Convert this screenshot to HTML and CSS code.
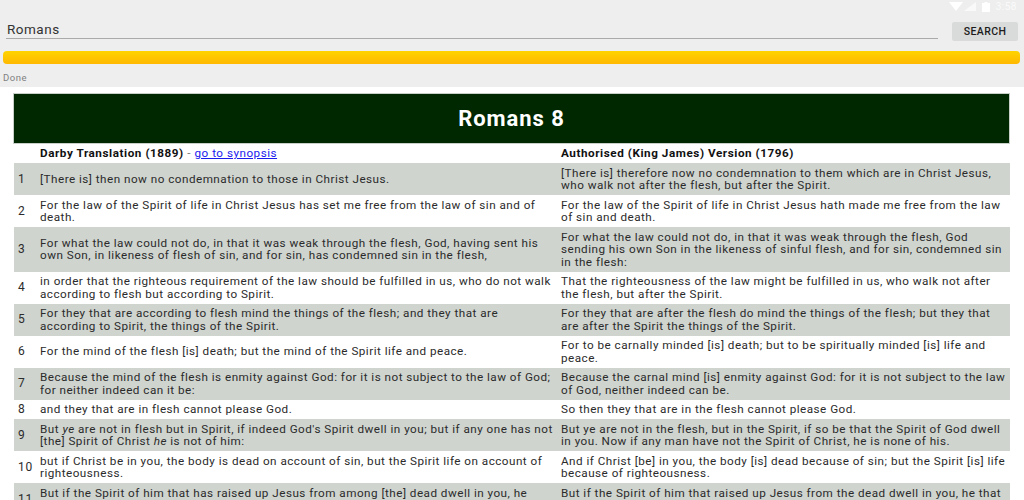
FILE: index.html
```html
<!DOCTYPE html>
<html lang="en">
<head>
<meta charset="utf-8">
<title>Romans 8</title>
<link rel="stylesheet" href="styles.css">
</head>
<body>
<header class="app">
  <div class="status">
    <svg class="wifi" width="14" height="9" viewBox="0 0 14 9"><path d="M0 0H14L7 9Z"/></svg>
    <svg class="signal" width="12" height="9" viewBox="0 0 12 9"><path d="M0 9L12 0V9Z"/></svg>
    <svg class="battery" width="8" height="10" viewBox="0 0 8 10"><path d="M2.500 0H5.500V1H8V10H0V1H2.500Z"/></svg>
    <span class="clock">3:58</span>
  </div>
  <div class="search">
    <div class="field">Romans</div>
    <button class="btn">SEARCH</button>
  </div>
  <div class="bar"></div>
  <div class="done">Done</div>
</header>
<main class="content">
  <h1 class="title">Romans 8</h1>
  <table class="verses">
    <colgroup><col class="c-n"><col class="c-d"><col class="c-k"></colgroup>
    <tr class="head"><th></th><th>Darby Translation (1889) <span class="dash">-</span> <a href="#">go to synopsis</a></th><th>Authorised (King James) Version (1796)</th></tr>
    <tr class="odd"><td>1</td><td>[There is] then now no condemnation to those in Christ Jesus.</td><td>[There is] therefore now no condemnation to them which are in Christ Jesus, who walk not after the flesh, but after the Spirit.</td></tr>
    <tr><td>2</td><td>For the law of the Spirit of life in Christ Jesus has set me free from the law of sin and of death.</td><td>For the law of the Spirit of life in Christ Jesus hath made me free from the law of sin and death.</td></tr>
    <tr class="odd"><td>3</td><td>For what the law could not do, in that it was weak through the flesh, God, having sent his own Son, in likeness of flesh of sin, and for sin, has condemned sin in the flesh,</td><td>For what the law could not do, in that it was weak through the flesh, God sending his own Son in the likeness of sinful flesh, and for sin, condemned sin in the flesh:</td></tr>
    <tr><td>4</td><td>in order that the righteous requirement of the law should be fulfilled in us, who do not walk according to flesh but according to Spirit.</td><td>That the righteousness of the law might be fulfilled in us, who walk not after the flesh, but after the Spirit.</td></tr>
    <tr class="odd"><td>5</td><td>For they that are according to flesh mind the things of the flesh; and they that are according to Spirit, the things of the Spirit.</td><td>For they that are after the flesh do mind the things of the flesh; but they that are after the Spirit the things of the Spirit.</td></tr>
    <tr><td>6</td><td>For the mind of the flesh [is] death; but the mind of the Spirit life and peace.</td><td>For to be carnally minded [is] death; but to be spiritually minded [is] life and peace.</td></tr>
    <tr class="odd"><td>7</td><td>Because the mind of the flesh is enmity against God: for it is not subject to the law of God; for neither indeed can it be:</td><td>Because the carnal mind [is] enmity against God: for it is not subject to the law of God, neither indeed can be.</td></tr>
    <tr><td>8</td><td>and they that are in flesh cannot please God.</td><td>So then they that are in the flesh cannot please God.</td></tr>
    <tr class="odd"><td>9</td><td>But <em>ye</em> are not in flesh but in Spirit, if indeed God's Spirit dwell in you; but if any one has not [the] Spirit of Christ <em>he</em> is not of him:</td><td>But ye are not in the flesh, but in the Spirit, if so be that the Spirit of God dwell in you. Now if any man have not the Spirit of Christ, he is none of his.</td></tr>
    <tr><td>10</td><td>but if Christ be in you, the body is dead on account of sin, but the Spirit life on account of righteousness.</td><td>And if Christ [be] in you, the body [is] dead because of sin; but the Spirit [is] life because of righteousness.</td></tr>
    <tr class="odd"><td>11</td><td>But if the Spirit of him that has raised up Jesus from among [the] dead dwell in you, he that&nbsp;has raised up Christ from among [the] dead shall quicken your mortal bodies also</td><td>But if the Spirit of him that raised up Jesus from the dead dwell in you, he that raised up Christ from the dead shall also quicken your mortal bodies</td></tr>
  </table>
</main>
</body>
</html>
```
FILE: styles.css
```css
* { box-sizing: border-box; }
html, body { margin: 0; height: 500px; overflow: hidden; background: #fff; }
body { font-family: Roboto, "Liberation Sans", sans-serif; color: #2b2b2b; }

.app { background: #eeeeee; height: 87px; display: flex; flex-direction: column; }
.status { height: 12px; padding: 1px 7px 0 0; display: flex; justify-content: flex-end; align-items: center; color: #fff; }
.status svg { fill: #fff; flex: none; }
.signal { margin-left: 1px; opacity: .7; }
.battery { margin-left: 6px; }
.clock { font-size: 10px; line-height: 12px; margin-left: 6px; opacity: .75; letter-spacing: .5px; }

.search { display: flex; align-items: flex-start; padding: 9px 6px 0 6px; height: 39px; }
.field { flex: 1; height: 18px; font-size: 13.5px; line-height: 17px; padding-left: 1px; color: #333; border-bottom: 1.5px solid #aaa; letter-spacing: .5px; }
.btn { margin: 1px 0 0 14px; width: 66px; height: 19px; padding: 0; border: 0; border-radius: 2px; background: #d9dbda; font: 500 10.5px Roboto, sans-serif; letter-spacing: .4px; color: #1c1c1c; }

.bar { margin: 0 4px 0 3px; height: 13px; border-radius: 4px; background: linear-gradient(#ffd400, #ffb800); }
.done { font-size: 9.5px; line-height: 12px; margin-top: 8px; padding-left: 3px; color: #808080; letter-spacing: .5px; }

.content { padding: 6px 14px 0; }
.title { margin: 0 0 0 -1px; height: 51px; background: #002800; border: 1px solid #c8cfc8; color: #fff; font-size: 22px; font-weight: 700; line-height: 49px; text-align: center; letter-spacing: .95px; }

.verses { width: 100%; table-layout: fixed; border-collapse: collapse; font-size: 11.7px; line-height: 12.5px; letter-spacing: .48px; color: #2b2b2b; }
.c-n { width: 26px; }
.c-d { width: 521px; }
.verses th { text-align: left; font-weight: 700; padding: 3px 0; color: #111; height: 19px; letter-spacing: .56px; }
.dash { font-weight: 400; color: #777; }
.verses a { font-weight: 400; color: #1a1aee; letter-spacing: .5px; }
.verses td { padding: 3.5px 3px 3.5px 0; vertical-align: middle; }
.verses td:nth-child(2) { padding-right: 7px; }
.verses td:first-child { padding-left: 4px; padding-right: 0; font-size: 12px; letter-spacing: .8px; }
.odd { background: #cfd4cf; }
```
